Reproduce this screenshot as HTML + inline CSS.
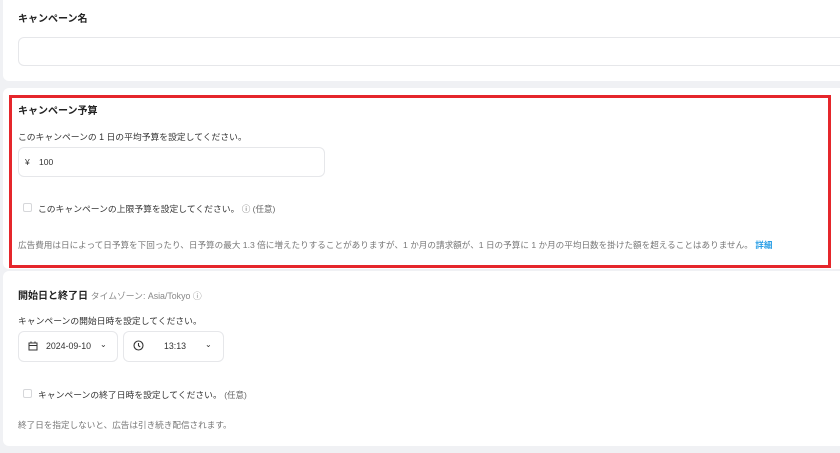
<!DOCTYPE html>
<html><head><meta charset="utf-8">
<style>
*{box-sizing:border-box;margin:0;padding:0}
body{width:840px;height:453px;background:#f0f1f4;font-family:"Liberation Sans","Noto Sans CJK JP",sans-serif;position:relative;overflow:hidden;color:#222}
.card{position:absolute;left:3px;right:-10px;background:#fff;border-radius:6px}
.abs{position:absolute;white-space:nowrap}
.h{font-size:10px;font-weight:bold;color:#222}
.t{font-size:8.8px;color:#333}
.g{font-size:8.6px;color:#777}
.box{position:absolute;background:#fff;border:1px solid #e6e7ea;border-radius:6px}
.cb{position:absolute;width:9px;height:9px;border:1px solid #d6d7da;border-radius:2px;background:#fff}
</style></head><body>
<div class="card" style="top:-6px;height:87px"></div>
<div class="abs h" style="left:18px;top:10px">キャンペーン名</div>
<div class="box" style="left:18px;top:37px;width:840px;height:29px"></div>

<div class="card" style="top:88px;height:181px"></div>
<div style="position:absolute;left:9px;top:95px;width:822px;height:173px;border:3px solid #e5262b"></div>
<div class="abs h" style="left:18px;top:102px">キャンペーン予算</div>
<div class="abs t" style="left:18px;top:130px">このキャンペーンの 1 日の平均予算を設定してください。</div>
<div class="box" style="left:18px;top:147px;width:307px;height:30px"></div>
<div class="abs t" style="left:25px;top:157px;font-size:8.5px">¥</div>
<div class="abs t" style="left:39px;top:157px;font-size:8.5px">100</div>
<div class="cb" style="left:23px;top:203px"></div>
<div class="abs t" style="left:38px;top:202px">このキャンペーンの上限予算を設定してください。 <span style="color:#666;font-size:8.5px">ⓘ (任意)</span></div>
<div class="abs g" style="left:18px;top:239px">広告費用は日によって日予算を下回ったり、日予算の最大 1.3 倍に増えたりすることがありますが、1 か月の請求額が、1 日の予算に 1 か月の平均日数を掛けた額を超えることはありません。 <span style="color:#2b9fe6;font-weight:bold">詳細</span></div>

<div class="card" style="top:271px;height:175px"></div>
<div class="abs h" style="left:18px;top:287px">開始日と終了日 <span style="font-weight:normal;color:#888;font-size:8.8px">タイムゾーン: Asia/Tokyo ⓘ</span></div>
<div class="abs t" style="left:18px;top:314px">キャンペーンの開始日時を設定してください。</div>
<div class="box" style="left:18px;top:331px;width:100px;height:31px"></div>
<svg class="abs" style="left:28px;top:341px" width="10" height="10" viewBox="0 0 10 10"><rect x="1" y="2" width="8" height="7" fill="none" stroke="#333" stroke-width="1"/><line x1="1" y1="4.5" x2="9" y2="4.5" stroke="#333"/><line x1="3" y1="0.5" x2="3" y2="2.5" stroke="#333"/><line x1="7" y1="0.5" x2="7" y2="2.5" stroke="#333"/></svg>
<div class="abs t" style="left:46px;top:341px;font-size:8.8px">2024-09-10</div>
<div class="abs" style="left:100px;top:340px;font-size:8px;color:#333">⌄</div>
<div class="box" style="left:123px;top:331px;width:101px;height:31px"></div>
<svg class="abs" style="left:133px;top:340px" width="11" height="11" viewBox="0 0 11 11"><circle cx="5.5" cy="5.5" r="4.5" fill="none" stroke="#333" stroke-width="1.1"/><path d="M5.5 3v2.7l1.7 1.2" fill="none" stroke="#333" stroke-width="1.1"/></svg>
<div class="abs t" style="left:164px;top:341px;font-size:8.8px">13:13</div>
<div class="abs" style="left:205px;top:340px;font-size:8px;color:#333">⌄</div>
<div class="cb" style="left:23px;top:389px"></div>
<div class="abs t" style="left:38px;top:388px">キャンペーンの終了日時を設定してください。 <span style="color:#666;font-size:8.5px">(任意)</span></div>
<div class="abs g" style="left:18px;top:419px">終了日を指定しないと、広告は引き続き配信されます。</div>
</body></html>
